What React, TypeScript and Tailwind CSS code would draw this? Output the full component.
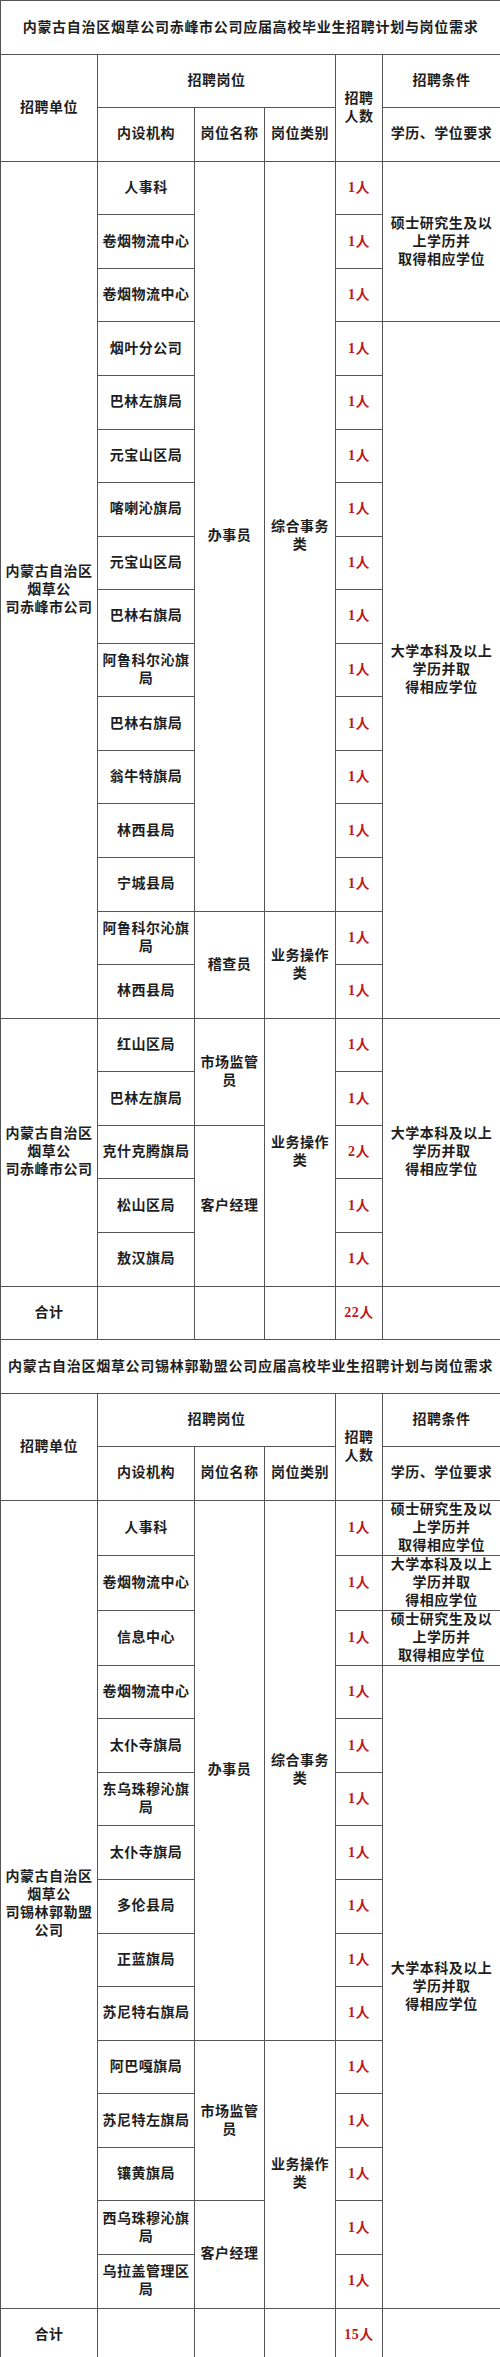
import { ReactNode } from "react";

type Span = { text: ReactNode; span: number };

type TRow = {
  unit?: Span;
  dept: string;
  name?: Span;
  cat?: Span;
  count: string;
  cond?: Span;
};

const border = "border border-[#555]";
const cell = `${border} text-center align-middle px-[3px] leading-[18px]`;
const red = "text-[#c0161c]";

const MASTER = (
  <>
    硕士研究生及以
    <br />
    上学历并
    <br />
    取得相应学位
  </>
);

const BACH = (
  <>
    大学本科及以上
    <br />
    学历并取
    <br />
    得相应学位
  </>
);

const CLERK = <>办事员</>;
const GENERAL = (
  <>
    综合事务
    <br />
    类
  </>
);
const OPERATE = (
  <>
    业务操作
    <br />
    类
  </>
);
const MARKET = (
  <>
    市场监管
    <br />
    员
  </>
);

const chifengUnit = (
  <>
    内蒙古自治区
    <br />
    烟草公
    <br />
    司赤峰市公司
  </>
);

const xilinUnit = (
  <>
    内蒙古自治区
    <br />
    烟草公
    <br />
    司锡林郭勒盟
    <br />
    公司
  </>
);

// 赤峰 - first block
const chifengA: TRow[] = [
  "人事科",
  "卷烟物流中心",
  "卷烟物流中心",
  "烟叶分公司",
  "巴林左旗局",
  "元宝山区局",
  "喀喇沁旗局",
  "元宝山区局",
  "巴林右旗局",
  "阿鲁科尔沁旗局",
  "巴林右旗局",
  "翁牛特旗局",
  "林西县局",
  "宁城县局",
  "阿鲁科尔沁旗局",
  "林西县局",
].map((dept, i) => ({
  dept,
  count: "1人",
  unit: i === 0 ? { text: chifengUnit, span: 16 } : undefined,
  name:
    i === 0
      ? { text: CLERK, span: 14 }
      : i === 14
      ? { text: <>稽查员</>, span: 2 }
      : undefined,
  cat:
    i === 0
      ? { text: GENERAL, span: 14 }
      : i === 14
      ? { text: OPERATE, span: 2 }
      : undefined,
  cond:
    i === 0
      ? { text: MASTER, span: 3 }
      : i === 3
      ? { text: BACH, span: 13 }
      : undefined,
}));

// 赤峰 - second block
const chifengB: TRow[] = [
  { dept: "红山区局", count: "1人" },
  { dept: "巴林左旗局", count: "1人" },
  { dept: "克什克腾旗局", count: "2人" },
  { dept: "松山区局", count: "1人" },
  { dept: "敖汉旗局", count: "1人" },
].map((r, i) => ({
  ...r,
  unit: i === 0 ? { text: chifengUnit, span: 5 } : undefined,
  name:
    i === 0
      ? { text: MARKET, span: 2 }
      : i === 2
      ? { text: <>客户经理</>, span: 3 }
      : undefined,
  cat: i === 0 ? { text: OPERATE, span: 5 } : undefined,
  cond: i === 0 ? { text: BACH, span: 5 } : undefined,
}));

// 锡林郭勒盟
const xilin: TRow[] = [
  "人事科",
  "卷烟物流中心",
  "信息中心",
  "卷烟物流中心",
  "太仆寺旗局",
  "东乌珠穆沁旗局",
  "太仆寺旗局",
  "多伦县局",
  "正蓝旗局",
  "苏尼特右旗局",
  "阿巴嘎旗局",
  "苏尼特左旗局",
  "镶黄旗局",
  "西乌珠穆沁旗局",
  "乌拉盖管理区局",
].map((dept, i) => ({
  dept,
  count: "1人",
  unit: i === 0 ? { text: xilinUnit, span: 15 } : undefined,
  name:
    i === 0
      ? { text: CLERK, span: 10 }
      : i === 10
      ? { text: MARKET, span: 3 }
      : i === 13
      ? { text: <>客户经理</>, span: 2 }
      : undefined,
  cat:
    i === 0
      ? { text: GENERAL, span: 10 }
      : i === 10
      ? { text: OPERATE, span: 5 }
      : undefined,
  cond:
    i === 0 || i === 2
      ? { text: MASTER, span: 1 }
      : i === 1
      ? { text: BACH, span: 1 }
      : i === 3
      ? { text: BACH, span: 12 }
      : undefined,
}));

const SpanCell = ({ s }: { s?: Span }) =>
  s ? (
    <td rowSpan={s.span} className={cell}>
      {s.text}
    </td>
  ) : null;

const BodyRows = ({ rows }: { rows: TRow[] }) => (
  <>
    {rows.map((r, i) => (
      <tr key={i} className="h-[53.57px]">
        <SpanCell s={r.unit} />
        <td className={cell}>{r.dept}</td>
        <SpanCell s={r.name} />
        <SpanCell s={r.cat} />
        <td className={`${cell} ${red}`}>{r.count}</td>
        <SpanCell s={r.cond} />
      </tr>
    ))}
  </>
);

const TitleAndHeader = ({ title }: { title: string }) => (
  <>
    <tr className="h-[53.57px]">
      <td
        colSpan={6}
        className={`${border} text-center align-middle px-1 whitespace-nowrap text-[14px] tracking-[0.7px]`}
      >
        {title}
      </td>
    </tr>
    <tr className="h-[53.57px]">
      <td rowSpan={2} className={cell}>
        招聘单位
      </td>
      <td colSpan={3} className={cell}>
        招聘岗位
      </td>
      <td rowSpan={2} className={cell}>
        招聘
        <br />
        人数
      </td>
      <td className={cell}>招聘条件</td>
    </tr>
    <tr className="h-[53.57px]">
      <td className={cell}>内设机构</td>
      <td className={cell}>岗位名称</td>
      <td className={cell}>岗位类别</td>
      <td className={`${cell} whitespace-nowrap`}>学历、学位要求</td>
    </tr>
  </>
);

const TotalRow = ({ total }: { total: string }) => (
  <tr className="h-[53.57px]">
    <td className={cell}>合计</td>
    <td className={cell}></td>
    <td className={cell}></td>
    <td className={cell}></td>
    <td className={`${cell} ${red}`}>{total}</td>
    <td className={cell}></td>
  </tr>
);

const App = () => {
  return (
    <div className="w-[500px] bg-white">
      <table className="w-[500px] table-fixed border-collapse text-[14px] tracking-[0.5px] font-semibold text-[#1e1e1e] font-['Liberation_Serif','Noto_Sans_CJK_SC',serif]">
        <colgroup>
          <col className="w-[97px]" />
          <col className="w-[97px]" />
          <col className="w-[70px]" />
          <col className="w-[71px]" />
          <col className="w-[47px]" />
          <col className="w-[118px]" />
        </colgroup>
        <tbody>
          <TitleAndHeader title="内蒙古自治区烟草公司赤峰市公司应届高校毕业生招聘计划与岗位需求" />
          <BodyRows rows={chifengA} />
          <BodyRows rows={chifengB} />
          <TotalRow total="22人" />
          <TitleAndHeader title="内蒙古自治区烟草公司锡林郭勒盟公司应届高校毕业生招聘计划与岗位需求" />
          <BodyRows rows={xilin} />
          <TotalRow total="15人" />
        </tbody>
      </table>
    </div>
  );
};

export default App;
